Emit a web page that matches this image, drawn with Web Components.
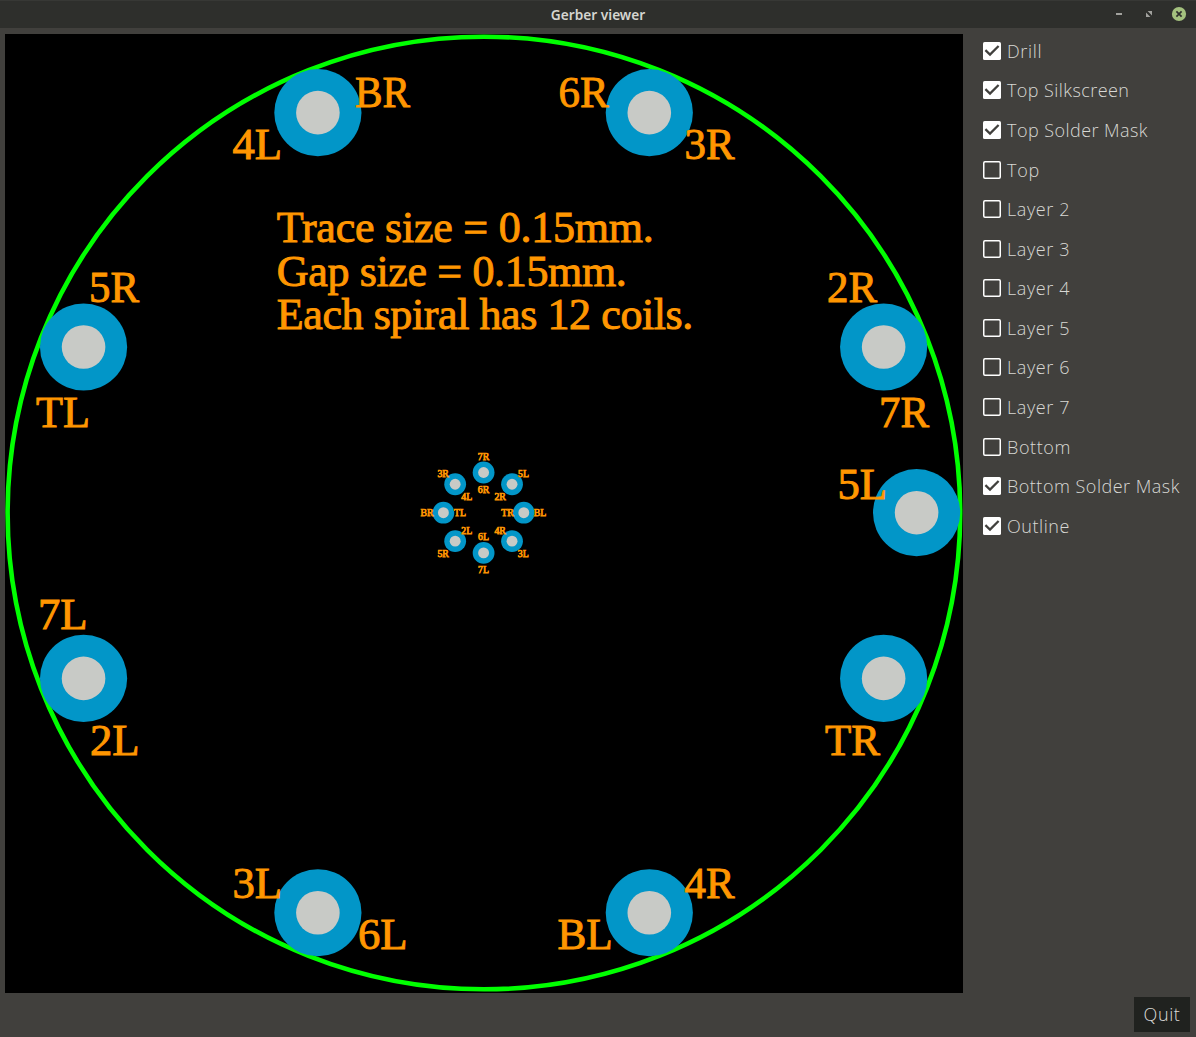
<!DOCTYPE html>
<html lang="en">
<head>
<meta charset="utf-8">
<title>Gerber viewer</title>
<style>
html,body{margin:0;height:100%;overflow:hidden;background:#41403d}
body{font-family:"Open Sans",sans-serif}
</style>
</head>
<body>
<gerber-window></gerber-window>
<script>
class TitleBar extends HTMLElement{
  constructor(){
    super();
    this.attachShadow({mode:'open'}).innerHTML=`
<style>
:host{display:grid;grid-template-columns:1fr auto 1fr;align-items:center;height:28px;background:#2e2f2c;border-top:1px solid #373835;box-sizing:border-box;flex:none}
.title{grid-column:2;font:600 13.7px/27px "Noto Sans",sans-serif;color:#d5d5d0;white-space:nowrap}
svg{justify-self:end;display:block}
</style>
<span class="title"><slot></slot></span>
<svg width="90" height="27" viewBox="1106 1 90 27">
<path d="M1116 14h6" stroke="#a2a29e" stroke-width="2"/>
<path d="M1147.6 11h4.4v4.4zM1146 12.6v4.4h4.4z" fill="#a2a29e"/>
<circle cx="1179" cy="14" r="7.1" fill="#a4c17e"/>
<path d="M1176.4 11.4l5.2 5.2M1181.6 11.4l-5.2 5.2" stroke="#2e2f2c" stroke-width="1.7"/>
</svg>`;
  }
}
customElements.define('title-bar',TitleBar);

class LayerToggle extends HTMLElement{
  connectedCallback(){
    const on=this.hasAttribute('checked');
    this.attachShadow({mode:'open'}).innerHTML=`
<style>
:host{display:flex;align-items:center;gap:6px;height:39.58px;color:#d8d8d4;font:300 18px/24px "Open Sans",sans-serif;letter-spacing:var(--track,.5px);white-space:nowrap}
svg{display:block;flex:none}
</style>
<svg width="18" height="18" viewBox="0 0 18 18">
${on?'<rect width="18" height="18" rx="1.6" fill="#fff"/><path d="M2.4 8.2l4.6 4.4 8.6-8.6" fill="none" stroke="#41403d" stroke-width="2.3"/>'
:'<rect x=".75" y=".75" width="16.5" height="16.5" rx="1.2" fill="none" stroke="#fff" stroke-width="1.5"/>'}
</svg><span><slot></slot></span>`;
  }
}
customElements.define('layer-toggle',LayerToggle);

class PushButton extends HTMLElement{
  constructor(){
    super();
    this.attachShadow({mode:'open'}).innerHTML=`
<style>
:host{display:flex;align-items:center;justify-content:center;box-sizing:border-box;padding-bottom:1px;width:56px;height:35px;background:#20221f;color:#dcdcd8;font:300 18px/24px "Open Sans",sans-serif;letter-spacing:.6px}
</style><span><slot></slot></span>`;
  }
}
customElements.define('push-button',PushButton);

class BoardView extends HTMLElement{
  constructor(){
    super();
    const cx=483.6,cy=512.7;
    const pad=(x,y,r)=>`<circle cx="${x}" cy="${y}" r="${r}" fill="#0296c8"/><circle cx="${x}" cy="${y}" r="${r/2}" fill="#c8cac6"/>`;
    const ring=(angles,dist,r)=>angles.map(a=>pad((cx+dist*Math.cos(a*Math.PI/180)).toFixed(2),(cy+dist*Math.sin(a*Math.PI/180)).toFixed(2),r)).join('');
    const big=[['BR',355,107],['4L',232.5,159],['6R',558.5,107],['3R',684.5,159],['5R',89,302],['TL',36,427],
      ['2R',827,302],['7R',879,427],['5L',837.5,498.7],['7L',38,628.7],['2L',90,754.7],['TR',825,754.7],
      ['3L',232.5,897.5],['6L',358,949.2],['4R',684.5,897.5],['BL',557.5,949.2]];
    const span=t=>({BR:55,TR:55,TL:54,BL:55.2}[t]||(t[1]==='R'?50:49.6));
    const small=[['7R',483.5,459.6],['3R',443.2,476.6],['5L',523.5,476.6],['4L',466.8,499.6],['6R',483.5,492.9],['2R',500.2,499.6],
      ['BR',427,516.4],['TL',460,516.4],['TR',507.5,516.4],['BL',540,516.4],['2L',466.8,533.6],['6L',483.5,540.4],['4R',500.2,533.6],
      ['5R',443.2,556.5],['3L',523.3,556.5],['7L',483.5,572.8]];
    const note=[['Trace size = 0.15mm.',276.8,242.2,377],['Gap size = 0.15mm.',276.8,285.8,350],['Each spiral has 12 coils.',276.8,329.2,416.5]];
    this.attachShadow({mode:'open'}).innerHTML=`
<style>
:host{display:block;width:958px;height:959px;background:#000;flex:none}
svg{display:block}
text{font-family:"Liberation Serif",serif;fill:#ff9600;stroke:#ff9600}
.big{font-size:44px;stroke-width:.95px}
.small{font-size:9.8px;stroke-width:.75px;text-anchor:middle}
</style>
<svg width="958" height="959" viewBox="5 34 958 959">
<circle cx="483.9" cy="513" r="476.3" fill="none" stroke="#00ff00" stroke-width="4.6"/>
${ring([0,22.5,67.5,112.5,157.5,202.5,247.5,292.5,337.5],433,43.6)}
${ring([0,45,90,135,180,225,270,315],40.2,10.9)}
<g class="big">${big.map(t=>`<text x="${t[1]}" y="${t[2]}" textLength="${span(t[0])}" lengthAdjust="spacingAndGlyphs">${t[0]}</text>`).join('')}
${note.map(t=>`<text x="${t[1]}" y="${t[2]}" textLength="${t[3]}">${t[0]}</text>`).join('')}</g>
<g class="small">${small.map(t=>`<text x="${t[1]}" y="${t[2]}">${t[0]}</text>`).join('')}</g>
</svg>`;
  }
}
customElements.define('board-view',BoardView);

class GerberWindow extends HTMLElement{
  constructor(){
    super();
    const layers=[['Drill',1,.65],['Top Silkscreen',1,.43],['Top Solder Mask',1,.45],['Top',0,.7],['Layer 2',0,.6],['Layer 3',0,.6],['Layer 4',0,.6],['Layer 5',0,.6],['Layer 6',0,.6],['Layer 7',0,.6],['Bottom',0,.6],['Bottom Solder Mask',1,.5],['Outline',1,.55]];
    this.attachShadow({mode:'open'}).innerHTML=`
<style>
:host{display:flex;flex-direction:column;width:1196px;height:1037px;background:#41403d}
main{display:flex;gap:20px;padding:6px 0 0 5px}
nav{display:flex;flex-direction:column;margin-top:-3px}
footer{display:flex;justify-content:flex-end;padding:4px 6px 0 0}
</style>
<title-bar>Gerber viewer</title-bar>
<main><board-view></board-view><nav>${layers.map(l=>`<layer-toggle style="--track:${l[2]}px"${l[1]?' checked':''}>${l[0]}</layer-toggle>`).join('')}</nav></main>
<footer><push-button>Quit</push-button></footer>`;
  }
}
customElements.define('gerber-window',GerberWindow);
</script>
</body>
</html>
